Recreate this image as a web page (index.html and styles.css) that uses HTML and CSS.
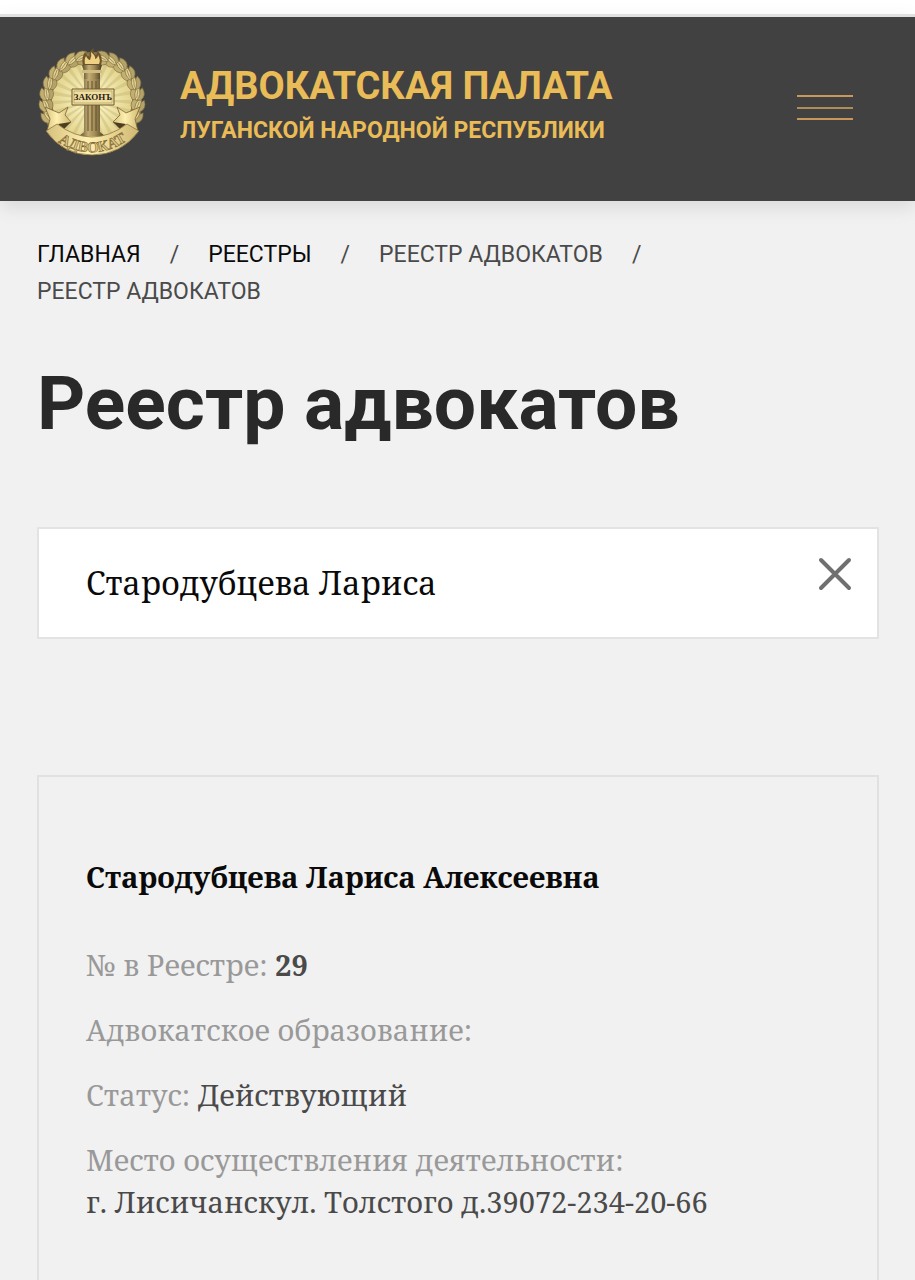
FILE: index.html
```html
<!DOCTYPE html>
<html lang="ru">
<head>
<meta charset="utf-8">
<meta name="viewport" content="width=device-width, initial-scale=1">
<title>Реестр адвокатов</title>
<link rel="stylesheet" href="styles.css">
</head>
<body>
<header class="header">
  <a class="brand" href="#">
    <svg class="emblem" viewBox="8 8 108 108" aria-hidden="true">
      <defs>
        <radialGradient id="glow"><stop offset="0" stop-color="#fffbd0"/><stop offset="1" stop-color="#e3d48e"/></radialGradient>
        <linearGradient id="stone"><stop offset="0" stop-color="#57482b"/><stop offset=".35" stop-color="#c3ad74"/><stop offset=".6" stop-color="#a48d56"/><stop offset="1" stop-color="#463a24"/></linearGradient>
        <linearGradient id="gold" x2="1" y2="0"><stop offset="0" stop-color="#d6c07c"/><stop offset=".45" stop-color="#fff0b0"/><stop offset="1" stop-color="#cfb771"/></linearGradient>
        <g id="leaf" stroke="#7d6c3e" stroke-width=".6">
          <path d="M-4 6Q-10 0-4-7Q1-1-1 6Z" fill="#c3af70"/>
          <path d="M4 6Q10 0 4-7Q-1-1 1 6Z" fill="#b5a268"/>
          <path d="M0 7Q-5 0 0-8Q5 0 0 7Z" fill="#e2d293"/>
          <path d="M0 4V-4" fill="none"/>
        </g>
        <path id="arc" d="M24 99Q62 126 101 98"/>
      </defs>
      <circle cx="62" cy="62" r="50" fill="#88764a"/>
      <circle cx="62" cy="60" r="40" fill="url(#glow)"/>
      <circle cx="62" cy="60" r="20" fill="none" stroke="#c9b973" stroke-width="38" stroke-dasharray="2 3" opacity=".5"/>
      <g transform="translate(62 62)">
        <use href="#leaf" transform="rotate(-108) translate(0 -46) rotate(72)"/>
        <use href="#leaf" transform="rotate(-94) translate(0 -46) rotate(72)"/>
        <use href="#leaf" transform="rotate(-80) translate(0 -46) rotate(72)"/>
        <use href="#leaf" transform="rotate(-66) translate(0 -46) rotate(72)"/>
        <use href="#leaf" transform="rotate(-52) translate(0 -46) rotate(72)"/>
        <use href="#leaf" transform="rotate(-38) translate(0 -46) rotate(72)"/>
        <use href="#leaf" transform="rotate(-25) translate(0 -46) rotate(72)"/>
        <use href="#leaf" transform="rotate(-13) translate(0 -45) rotate(78)"/>
        <use href="#leaf" transform="rotate(108) translate(0 -46) rotate(-72)"/>
        <use href="#leaf" transform="rotate(94) translate(0 -46) rotate(-72)"/>
        <use href="#leaf" transform="rotate(80) translate(0 -46) rotate(-72)"/>
        <use href="#leaf" transform="rotate(66) translate(0 -46) rotate(-72)"/>
        <use href="#leaf" transform="rotate(52) translate(0 -46) rotate(-72)"/>
        <use href="#leaf" transform="rotate(38) translate(0 -46) rotate(-72)"/>
        <use href="#leaf" transform="rotate(25) translate(0 -46) rotate(-72)"/>
        <use href="#leaf" transform="rotate(13) translate(0 -45) rotate(-78)"/>
      </g>
      <path d="M54 38H70V92L75 96H49L54 92Z" fill="url(#stone)"/>
      <path d="M58 41V91M62 41V91M66 41V91" stroke="#5e5030" stroke-width="1"/>
      <path d="M52 25H72L70 32V39H54V32Z" fill="url(#stone)"/>
      <path d="M52 30H72V33H52Z" fill="#d0bb80"/>
      <path d="M53 25Q51 18 55 12Q57 16 60 17Q58 11 64 8Q62 13 66 15Q68 13 67 10Q74 17 71 25Z" fill="#6b5429"/>
      <path d="M55 24Q54 19 56 16Q58 20 60 20Q62 16 61 12Q66 16 65 19Q68 18 68 15Q71 20 69 24Z" fill="#f0d083"/>
      <path d="M15 67L29 73L38 67L35 75L41 82L31 88L17 91L20 79Z" fill="url(#gold)" stroke="#7a6434" stroke-width=".8"/>
      <path d="M110 67L96 73L87 67L90 75L83 82L94 88L108 91L105 79Z" fill="url(#gold)" stroke="#7a6434" stroke-width=".8"/>
      <path d="M28 84L41 82L34 89ZM96 84L83 82L90 89Z" fill="#4d3e22"/>
      <path d="M16 91L27 84Q62 110 97 84L109 91Q91 115 62 115Q33 115 16 91Z" fill="url(#gold)" stroke="#8b7540" stroke-width=".8"/>
      <path d="M42 49H84V65H42Z" fill="#f0dfa2" stroke="#6e5a2c" stroke-width="1"/>
      <path d="M44 51H82V63H44Z" fill="none" stroke="#b39e62" stroke-width=".7"/>
      <text class="emblem-plate" x="63" y="60" text-anchor="middle">ЗАКОНЪ</text>
      <text class="emblem-ribbon" text-anchor="middle"><textPath href="#arc" startOffset="50%">АДВОКАТ</textPath></text>
    </svg>
    <span class="brand-text">
      <span class="brand-title">АДВОКАТСКАЯ ПАЛАТА</span>
      <span class="brand-subtitle">ЛУГАНСКОЙ НАРОДНОЙ РЕСПУБЛИКИ</span>
    </span>
  </a>
  <button class="menu" type="button" aria-label="Меню"><svg width="56" height="26" viewBox="0 0 56 26" aria-hidden="true"><path d="M0 0H56V2H0ZM0 23H56V25H0Z" fill="#c9965c"/><path d="M0 12H56V14H0Z" fill="#ab8d55"/></svg></button>
</header>
<main class="page">
  <nav aria-label="Навигация">
    <ol class="crumbs">
      <li><a href="#">ГЛАВНАЯ</a></li>
      <li><a href="#">РЕЕСТРЫ</a></li>
      <li>РЕЕСТР АДВОКАТОВ</li>
      <li>РЕЕСТР АДВОКАТОВ</li>
    </ol>
  </nav>
  <h1 class="title">Реестр адвокатов</h1>
  <form class="search">
    <input class="search-input" type="text" aria-label="Поиск адвоката" value="Стародубцева Лариса">
    <button class="clear" type="reset" aria-label="Очистить"><svg width="34" height="34" viewBox="0 0 34 34" aria-hidden="true"><path d="M3 3L31 31M31 3L3 31" fill="none" stroke="#707070" stroke-width="4" stroke-linecap="round"/></svg></button>
  </form>
  <article class="card">
    <h2 class="name">Стародубцева Лариса Алексеевна</h2>
    <dl class="facts">
      <div><dt>№ в Реестре:</dt> <dd><strong>29</strong></dd></div>
      <div><dt>Адвокатское образование:</dt> <dd></dd></div>
      <div><dt>Статус:</dt> <dd>Действующий</dd></div>
      <div><dt>Место осуществления деятельности:</dt><br><dd>г. Лисичанскул. Толстого д.39072-234-20-66</dd></div>
    </dl>
  </article>
</main>
</body>
</html>
```
FILE: styles.css
```css
* { box-sizing: border-box; }
body {
  margin: 0;
  min-height: 100vh;
  padding-top: 14px;
  display: flex;
  flex-direction: column;
  background: linear-gradient(#fff 14px, #f1f1f1 14px);
  color: #4a4a4a;
  font-family: Roboto, "Noto Sans", sans-serif;
}
a { color: inherit; text-decoration: none; }
button { padding: 0; border: 0; background: none; cursor: pointer; }
svg { display: block; }
.header {
  display: flex;
  align-items: center;
  justify-content: space-between;
  padding: 31px 62px 45px 38px;
  border-top: 3px solid #e0e0e0;
  background: #414141;
  background-clip: padding-box;
  box-shadow: 0 6px 18px rgba(0, 0, 0, .1);
}
.brand { display: flex; align-items: center; gap: 34px; color: #e9bc58; font-weight: 700; }
.emblem { width: 108px; height: 108px; flex: none; }
.emblem-plate { font: 700 9px "Liberation Serif", serif; fill: #2b210f; }
.emblem-ribbon { font: 700 15px "Liberation Serif", serif; fill: #ddc783; stroke: #7a6231; stroke-width: .6px; }
.brand-text { display: flex; flex-direction: column; padding-top: 12px; }
.brand-title { font-size: 38px; line-height: 46px; }
.brand-subtitle { font-size: 23px; line-height: 44px; }
.menu { margin-top: 12px; }
.page { flex: 1; display: flex; flex-direction: column; padding: 35px 36px 0 37px; }
.crumbs {
  display: flex;
  flex-wrap: wrap;
  margin: 0;
  padding: 0;
  list-style: none;
  font-size: 23px;
  line-height: 37px;
}
.crumbs a { color: #0a0a0a; }
.crumbs li:not(:last-child)::after { content: "/"; margin: 0 29px; }
.title { margin: 51px 0 82px; color: #292929; font-size: 75px; line-height: 84px; }
.search { position: relative; }
.search-input {
  display: block;
  width: 100%;
  height: 112px;
  padding: 0 90px 2px 47px;
  border: 2px solid #e3e3e3;
  border-radius: 0;
  background: #fff;
  color: #0a0a0a;
  font-family: "Noto Serif", "DejaVu Serif", serif;
  font-size: 32px;
}
.clear { position: absolute; top: 30px; right: 27px; }
.card {
  flex: 1;
  margin-top: 136px;
  padding: 79px 47px 52px;
  border: 2px solid #e1e1e1;
  border-bottom: 0;
  font-family: "Noto Serif", "DejaVu Serif", serif;
  font-size: 29px;
  line-height: 42px;
}
.name { margin: 0 0 46px; color: #0a0a0a; font-size: 29px; line-height: 42px; }
.facts { display: flex; flex-direction: column; gap: 23px; margin: 0; }
.facts dt, .facts dd { display: inline; margin: 0; }
.facts dt { color: #999; }
```
